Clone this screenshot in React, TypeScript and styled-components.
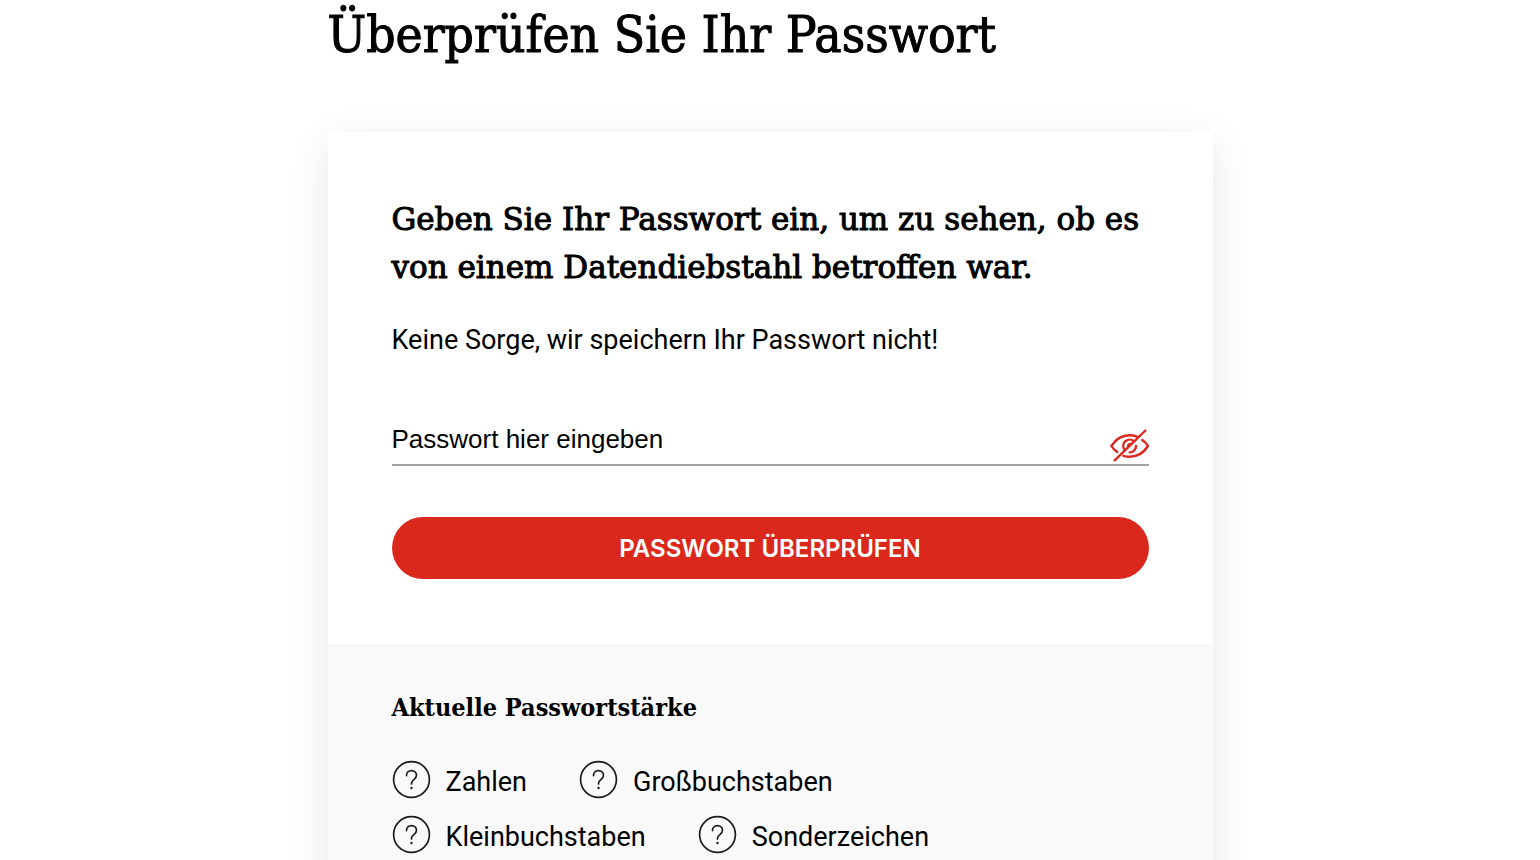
import React, { useState } from "react";
import styled, { createGlobalStyle } from "styled-components";

const slab = `"DejaVu Serif Condensed", "DejaVu Serif", serif`;

const GlobalStyle = createGlobalStyle`
  *, *::before, *::after { box-sizing: border-box; }
  body {
    margin: 0;
    background: #fff;
    color: #000;
    font-family: Roboto, "Noto Sans", sans-serif;
    font-size: 27px;
    line-height: 40px;
  }
`;

const Page = styled.main`
  max-width: 885px;
  margin: 0 auto;
`;

const Title = styled.h1`
  margin: 0;
  padding: 3px 0 65px;
  font-family: ${slab};
  font-size: 51px;
  font-weight: 400;
  line-height: 64px;
  -webkit-text-stroke: 1px #000;
`;

const Card = styled.section`
  background: #fff;
  border-radius: 4px;
  box-shadow: 0 12px 40px rgba(0, 0, 0, 0.1);
`;

const CheckForm = styled.form`
  display: flex;
  flex-direction: column;
  padding: 63px 64px 65px;
`;

const Heading = styled.h2`
  margin: 0 0 29px;
  font-family: "DejaVu Serif", serif;
  font-size: 31px;
  font-weight: 400;
  line-height: 48px;
  -webkit-text-stroke: 1px #000;
`;

const Note = styled.p`
  margin: 0 0 54px;
`;

const Field = styled.div`
  display: flex;
  align-items: flex-end;
  margin-bottom: 51px;
  border-bottom: 2px solid #a3a3a3;
`;

const PasswordInput = styled.input`
  flex: 1;
  min-width: 0;
  height: 50px;
  padding: 0;
  border: 0;
  outline: 0;
  background: transparent;
  color: #000;
  font: 26px/40px "Liberation Sans", Arial, sans-serif;

  &::placeholder {
    color: #000;
    opacity: 1;
  }
`;

const ToggleButton = styled.button`
  display: flex;
  padding: 0 0 2px;
  border: 0;
  background: none;
  color: #dc281e;
  cursor: pointer;

  svg {
    overflow: visible;
  }
`;

const SubmitButton = styled.button`
  height: 62px;
  padding: 2px 24px 0;
  border: 0;
  border-radius: 31px;
  background: #da291c;
  color: #fff;
  font: 600 24px/32px Inter, sans-serif;
  text-transform: uppercase;
  cursor: pointer;
`;

const Strength = styled.div`
  padding: 40px 64px;
  border-radius: 0 0 4px 4px;
  background: #f9f9f9;
`;

const StrengthTitle = styled.h3`
  margin: 0 0 28px;
  font-family: ${slab};
  font-size: 25px;
  font-weight: 700;
  line-height: 48px;
`;

const Criteria = styled.ul`
  display: flex;
  flex-wrap: wrap;
  row-gap: 13px;
  margin: 0;
  padding: 0;
  list-style: none;
`;

const Criterion = styled.li`
  display: flex;
  align-items: flex-start;
  gap: 15px;
  padding-right: 52px;
`;

const CriterionName = styled.span`
  padding-top: 2px;
`;

const EyeOffIcon = () => (
  <svg width="40" height="34" viewBox="-0.700 -0.500 40 34" fill="none" stroke="currentColor" strokeWidth="2.400" strokeLinecap="round" aria-hidden="true">
    <path d="M5 31.800 35.700 2" />
    <path d="M7.500 23.500C4.800 21.500 2.800 19.400 1.700 17.500 6 10.700 12.400 6.800 20 6.800c2.600 0 5 .5 7.200 1.300" />
    <path d="M32.500 11.500c2.500 1.700 4.500 3.800 5.800 6C34 24.300 27.500 28.200 20 28.200c-2.200 0-4.300-.3-6.200-.9" />
    <path d="M15 21.500a6.400 6.400 0 0 1 9-9" />
    <path d="M26.300 17.500a6.400 6.400 0 0 1-6.300 6.400" />
    <path d="M18.300 18.500a2.500 2.500 0 0 1 2.600-3" />
  </svg>
);

const QuestionIcon = () => (
  <svg width="39" height="39" viewBox="0 0 39 39" fill="none" stroke="#1c1c1c" strokeLinecap="round" aria-hidden="true">
    <circle cx="19.500" cy="19.500" r="17.900" strokeWidth="1.700" />
    <path d="M14.500 15.600c0-3 2.200-5 5-5s5 2 5 4.700c0 4.300-5 4.200-5 8v.7" strokeWidth="1.700" />
    <circle cx="19.500" cy="28" r="1.200" fill="#1c1c1c" stroke="none" />
  </svg>
);

const criteria = ["Zahlen", "Großbuchstaben", "Kleinbuchstaben", "Sonderzeichen"];

export default function App() {
  const [password, setPassword] = useState("");
  const [visible, setVisible] = useState(false);

  return (
    <>
      <GlobalStyle />
      <Page>
        <Title>Überprüfen Sie Ihr Passwort</Title>
        <Card>
          <CheckForm onSubmit={(e) => e.preventDefault()}>
            <Heading>Geben Sie Ihr Passwort ein, um zu sehen, ob es von einem Datendiebstahl betroffen war.</Heading>
            <Note>Keine Sorge, wir speichern Ihr Passwort nicht!</Note>
            <Field>
              <PasswordInput
                type={visible ? "text" : "password"}
                aria-label="Passwort hier eingeben"
                placeholder="Passwort hier eingeben"
                value={password}
                onChange={(e) => setPassword(e.target.value)}
              />
              <ToggleButton type="button" aria-label="Passwort anzeigen" aria-pressed={visible} onClick={() => setVisible(!visible)}>
                <EyeOffIcon />
              </ToggleButton>
            </Field>
            <SubmitButton type="submit">Passwort überprüfen</SubmitButton>
          </CheckForm>
          <Strength>
            <StrengthTitle>Aktuelle Passwortstärke</StrengthTitle>
            <Criteria>
              {criteria.map((name) => (
                <Criterion key={name}>
                  <QuestionIcon />
                  <CriterionName>{name}</CriterionName>
                </Criterion>
              ))}
            </Criteria>
          </Strength>
        </Card>
      </Page>
    </>
  );
}
